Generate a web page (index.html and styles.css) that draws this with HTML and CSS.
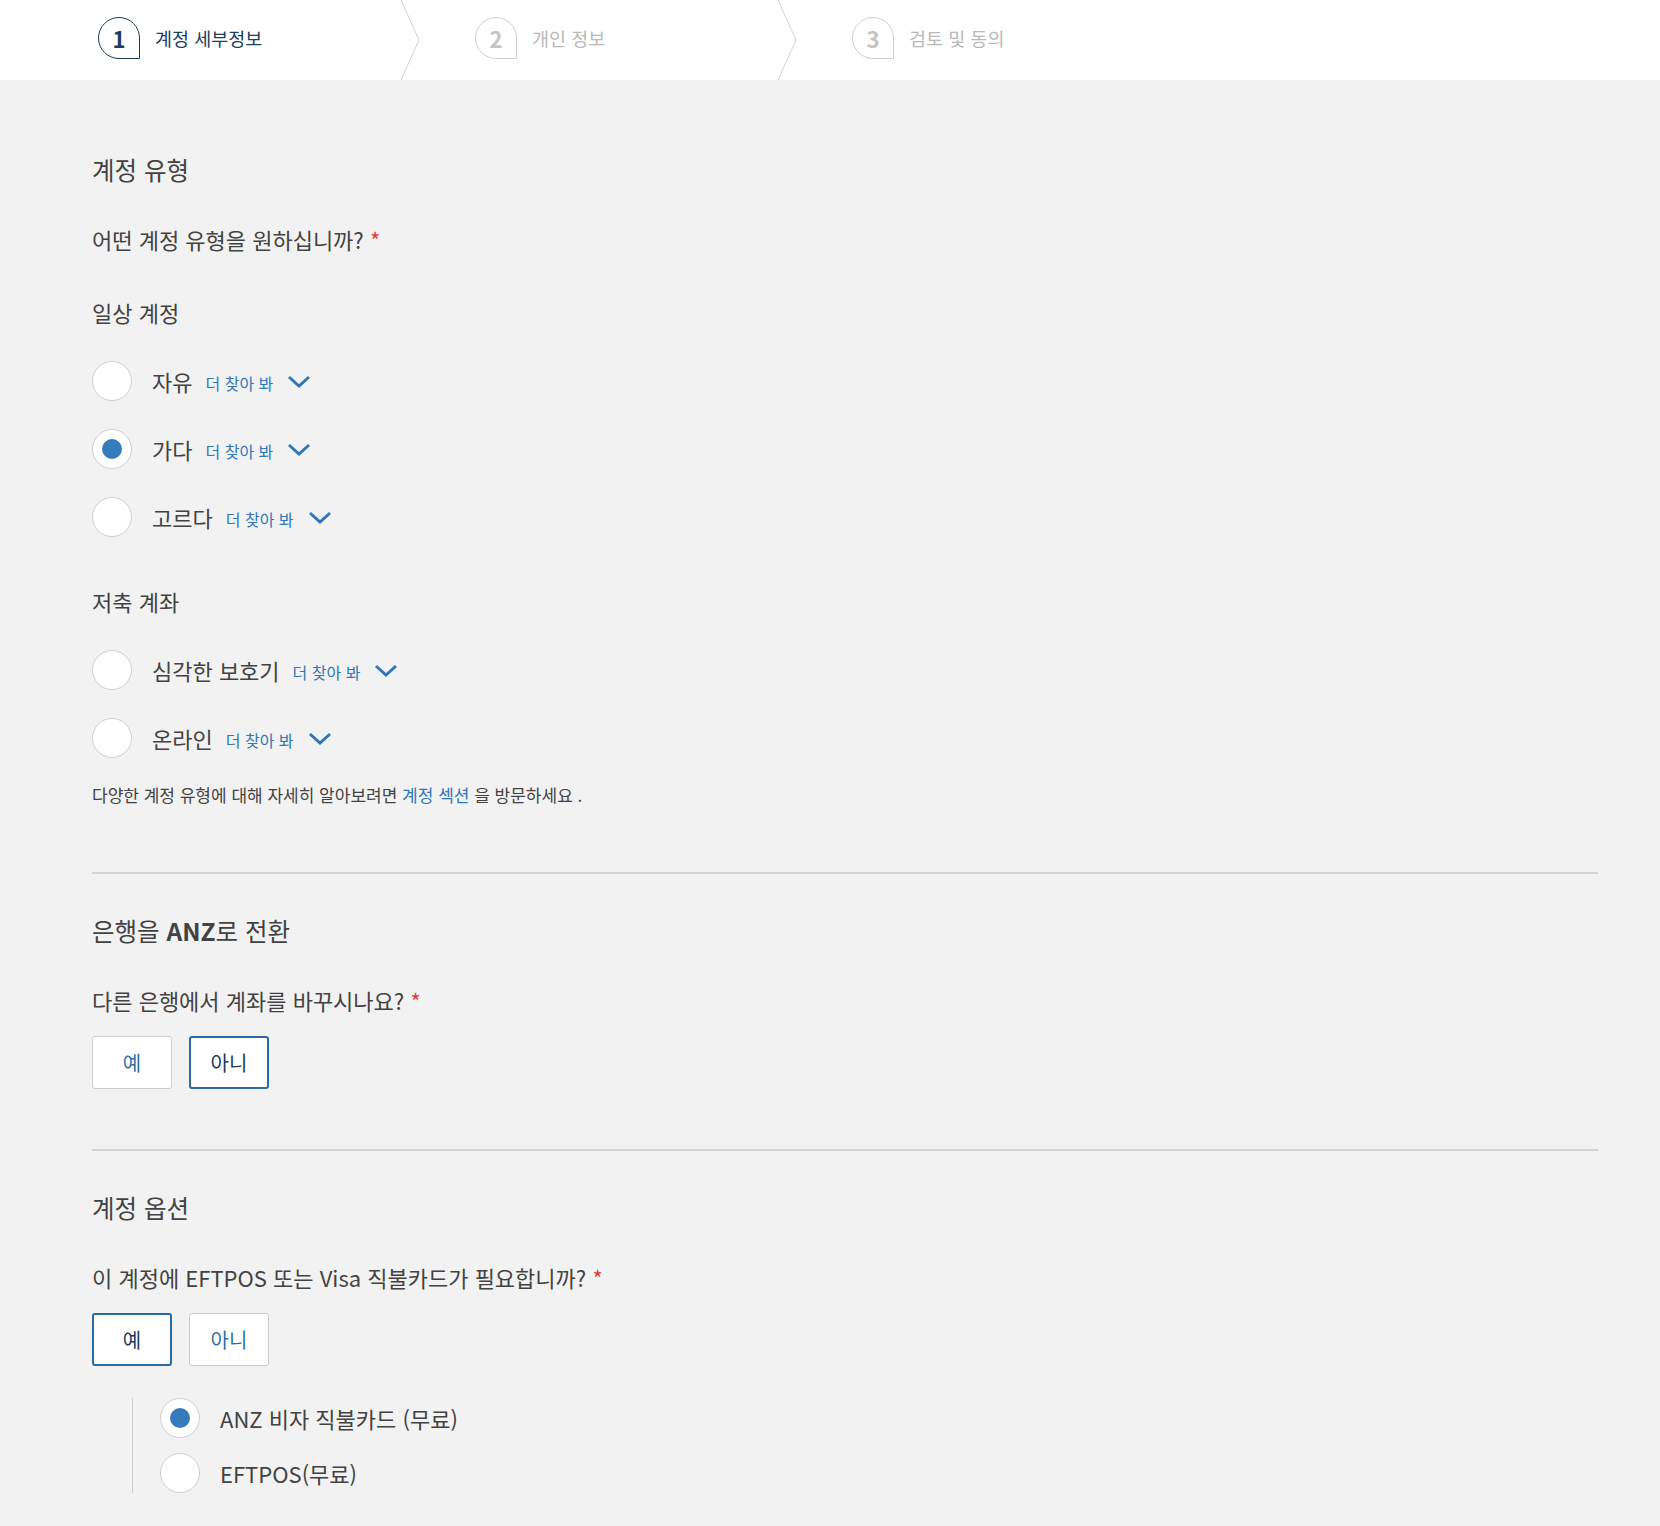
FILE: index.html
```html
<!DOCTYPE html>
<html lang="ko">
<head>
    <meta charset="UTF-8">
    <meta name="viewport" content="width=device-width, initial-scale=1.0">
    <title>계정 개설</title>
    <link rel="stylesheet" href="styles.css">
</head>
<body>

    <!-- Progress steps -->
    <div class="steps">
        <div class="step active">
            <span class="step-num">1</span>
            <span class="step-label">계정 세부정보</span>
            <svg class="step-sep" width="20" height="80" viewBox="0 0 20 80"><polyline points="1,0 19,40 1,80" fill="none" stroke="#d2d2d2" stroke-width="1"/></svg>
        </div>
        <div class="step">
            <span class="step-num">2</span>
            <span class="step-label">개인 정보</span>
            <svg class="step-sep" width="20" height="80" viewBox="0 0 20 80"><polyline points="1,0 19,40 1,80" fill="none" stroke="#d2d2d2" stroke-width="1"/></svg>
        </div>
        <div class="step">
            <span class="step-num">3</span>
            <span class="step-label">검토 및 동의</span>
        </div>
    </div>

    <div class="main">
        <!-- Account type -->
        <div class="section first">
            <h2>계정 유형</h2>
            <p class="question">어떤 계정 유형을 원하십니까? <span class="req">*</span></p>

            <p class="group-label">일상 계정</p>
            <div class="options">
                <div class="option">
                    <span class="radio"></span>
                    <span class="option-label">자유</span>
                    <a class="more" href="#">더 찾아 봐</a>
                    <svg class="chev" width="24" height="14" viewBox="0 0 24 14"><polyline points="2,2 12,11 22,2" fill="none" stroke="#2f77b6" stroke-width="3"/></svg>
                </div>
                <div class="option">
                    <span class="radio checked"></span>
                    <span class="option-label">가다</span>
                    <a class="more" href="#">더 찾아 봐</a>
                    <svg class="chev" width="24" height="14" viewBox="0 0 24 14"><polyline points="2,2 12,11 22,2" fill="none" stroke="#2f77b6" stroke-width="3"/></svg>
                </div>
                <div class="option">
                    <span class="radio"></span>
                    <span class="option-label">고르다</span>
                    <a class="more" href="#">더 찾아 봐</a>
                    <svg class="chev" width="24" height="14" viewBox="0 0 24 14"><polyline points="2,2 12,11 22,2" fill="none" stroke="#2f77b6" stroke-width="3"/></svg>
                </div>
            </div>

            <p class="group-label next">저축 계좌</p>
            <div class="options">
                <div class="option">
                    <span class="radio"></span>
                    <span class="option-label">심각한 보호기</span>
                    <a class="more" href="#">더 찾아 봐</a>
                    <svg class="chev" width="24" height="14" viewBox="0 0 24 14"><polyline points="2,2 12,11 22,2" fill="none" stroke="#2f77b6" stroke-width="3"/></svg>
                </div>
                <div class="option">
                    <span class="radio"></span>
                    <span class="option-label">온라인</span>
                    <a class="more" href="#">더 찾아 봐</a>
                    <svg class="chev" width="24" height="14" viewBox="0 0 24 14"><polyline points="2,2 12,11 22,2" fill="none" stroke="#2f77b6" stroke-width="3"/></svg>
                </div>
            </div>

            <p class="note">다양한 계정 유형에 대해 자세히 알아보려면 <a href="#">계정 섹션</a> 을 방문하세요 .</p>
        </div>

        <hr class="divider first">

        <!-- Switch bank -->
        <div class="section">
            <h2>은행을 <b>ANZ</b>로 전환</h2>
            <p class="question">다른 은행에서 계좌를 바꾸시나요? <span class="req">*</span></p>
            <div class="toggle-group">
                <button class="toggle">예</button>
                <button class="toggle selected">아니</button>
            </div>
        </div>

        <hr class="divider">

        <!-- Account options -->
        <div class="section">
            <h2>계정 옵션</h2>
            <p class="question">이 계정에 EFTPOS 또는 Visa 직불카드가 필요합니까? <span class="req">*</span></p>
            <div class="toggle-group">
                <button class="toggle selected">예</button>
                <button class="toggle">아니</button>
            </div>
            <div class="sub-options">
                <div class="option">
                    <span class="radio checked"></span>
                    <span class="sub-label">ANZ 비자 직불카드 (무료)</span>
                </div>
                <div class="option">
                    <span class="radio"></span>
                    <span class="sub-label">EFTPOS(무료)</span>
                </div>
            </div>
        </div>
    </div>

</body>
</html>
```

FILE: styles.css
```css
body {
    margin: 0;
    background-color: #f2f2f2;
    font-family: "Noto Sans CJK KR", "Noto Sans", sans-serif;
    color: #424242;
}
p {
    margin: 0;
}
a {
    color: #2f77b6;
    text-decoration: none;
}
/* Steps bar */
.steps {
    display: flex;
    align-items: center;
    gap: 55px;
    height: 80px;
    padding-left: 98px;
    background-color: #fff;
}
.step {
    display: flex;
    align-items: center;
    width: 322px;
    height: 80px;
    color: #b9b9b9;
}
.step-num {
    display: flex;
    align-items: center;
    justify-content: center;
    width: 42px;
    height: 42px;
    box-sizing: border-box;
    border: 1.5px solid #cfcfcf;
    border-radius: 50% 50% 0 50%;
    margin: 0 15px 4px 0;
    font-size: 22px;
    font-weight: 700;
    color: #c4c4c4;
}
.step-label {
    font-size: 18.5px;
    margin-bottom: 4px;
}
.step.active {
    color: #1d3c5e;
}
.step.active .step-num {
    border-color: #1d3c5e;
    color: #1d3c5e;
}
.step-sep {
    margin-left: auto;
    display: block;
}
/* Form */
.main {
    padding: 75px 62px 33px 92px;
}
h2 {
    margin: 0;
    font-size: 24.5px;
    font-weight: 400;
    line-height: 30px;
}
h2 b {
    font-weight: 700;
}
.section h2 {
    margin-top: 42px;
}
.section.first h2 {
    margin-top: 0;
}
.question {
    margin-top: 40px;
    font-size: 22px;
    line-height: 28px;
}
.req {
    color: #e2403a;
}
.group-label {
    margin-top: 45px;
    font-size: 22px;
    line-height: 28px;
}
.group-label.next {
    margin-top: 50px;
}
.options {
    display: flex;
    flex-direction: column;
    gap: 28px;
    margin-top: 35px;
}
.option {
    display: flex;
    align-items: center;
    height: 40px;
}
.radio {
    display: flex;
    align-items: center;
    justify-content: center;
    flex: none;
    width: 40px;
    height: 40px;
    box-sizing: border-box;
    border: 1.5px solid #d0d0d0;
    border-radius: 50%;
    background-color: #fff;
    margin-right: 20px;
}
.radio.checked::after {
    content: "";
    width: 20px;
    height: 20px;
    border-radius: 50%;
    background-color: #367bbb;
}
.option-label {
    font-size: 22px;
}
.more {
    margin-left: 13px;
    font-size: 16px;
    padding-top: 3px;
}
.chev {
    margin-left: 14px;
    margin-top: 2px;
}
.note {
    margin-top: 25px;
    font-size: 17px;
    line-height: 24px;
}
.divider {
    height: 2px;
    margin: 60px 0 0;
    border: none;
    background-color: #d4d4d4;
}
.divider.first {
    margin-top: 65px;
}
.toggle-group {
    display: flex;
    gap: 17px;
    margin-top: 22px;
}
.toggle {
    width: 80px;
    height: 53px;
    box-sizing: border-box;
    border: 1px solid #cdcdcd;
    border-radius: 3px;
    background-color: #fff;
    font-family: inherit;
    font-size: 20px;
    color: #2e6fa8;
    cursor: pointer;
}
.toggle.selected {
    border: 2px solid #2c6aa2;
    color: #1c3a5c;
}
.sub-options {
    display: flex;
    flex-direction: column;
    gap: 15px;
    margin: 32px 0 0 40px;
    padding-left: 27px;
    border-left: 1px solid #cfcfcf;
}
.sub-label {
    font-size: 22px;
}
```
